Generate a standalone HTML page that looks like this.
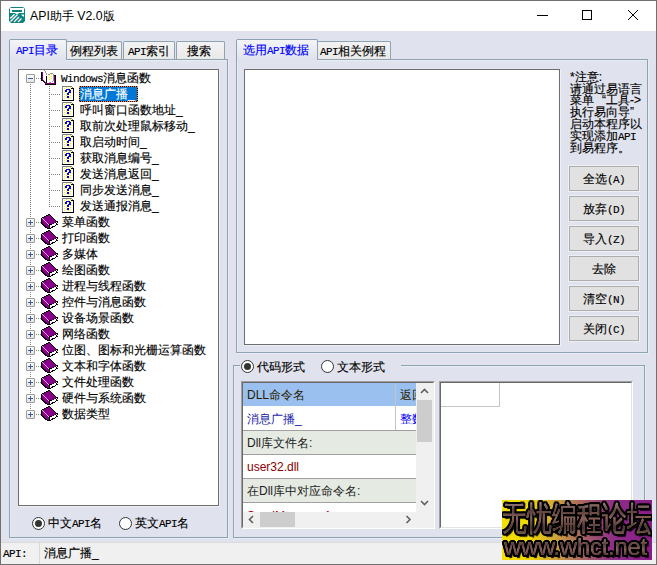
<!DOCTYPE html>
<html><head><meta charset="utf-8">
<style>
*{margin:0;padding:0;box-sizing:border-box}
html,body{width:657px;height:565px;overflow:hidden}
body{position:relative;background:#E0E3ED;font-family:"Liberation Sans",sans-serif;font-size:12px;color:#000;line-height:16px}
.a{position:absolute}
.tr,.tabi,.taba,.btn,.st{-webkit-text-stroke:0.15px currentColor}
.m{font-family:"Liberation Mono",monospace;font-size:11px;letter-spacing:-0.6px}
.tabi{position:absolute;border:1px solid #8DA2B3;border-bottom:none;border-radius:2px 2px 0 0;background:linear-gradient(#F3F3F3,#E9E9E9);height:18px;top:41px;white-space:nowrap;line-height:18px}
.taba{position:absolute;border:1px solid #8DA2B3;border-bottom:none;border-radius:2px 2px 0 0;background:linear-gradient(#F4F5F9,#E0E3ED 95%);height:21px;top:39px;color:#0000FF;white-space:nowrap;z-index:2}
.pane{position:absolute;border:1px solid #8DA2B3;box-shadow:inset 1px 1px 0 #EAECF4,1px 1px 0 #EAECF4}
.sunk{position:absolute;background:#fff;border:1px solid #6E6E6E;box-shadow:1px 1px 0 #EEF0F6}
.btn{position:absolute;left:569px;width:70px;height:25px;border:1px solid #ADADAD;box-shadow:0 0 0 1px #EEF0F6;background:#E1E1E1;text-align:center;line-height:23px;padding-top:1px;white-space:nowrap}
.tr{position:absolute;height:16px;white-space:nowrap;line-height:16px}
.radio{position:absolute;width:13px;height:13px;border:1px solid #333;border-radius:50%;background:#fff}
.radio.on::after{content:"";position:absolute;left:2px;top:2px;width:7px;height:7px;border-radius:50%;background:#333}
.vd{position:absolute;width:1px;background:repeating-linear-gradient(to bottom,#808080 0 1px,transparent 1px 2px)}
.hd{position:absolute;height:1px;background:repeating-linear-gradient(to right,#808080 0 1px,transparent 1px 2px)}
.xb{position:absolute;left:7px;width:9px;height:9px;border:1px solid #9A9A9A;border-radius:1px;background:linear-gradient(#fff,#E4E4E4)}
.xh{position:absolute;left:1px;top:3px;width:5px;height:1px;background:#3D5DA8}
.xv{position:absolute;left:3px;top:1px;width:1px;height:5px;background:#3D5DA8}
.txt{position:absolute;left:60px;top:0;height:16px;padding:0 1px}
.sel{color:#fff;border:1px dotted #FF8728;background:linear-gradient(#0078D7,#0078D7) padding-box,linear-gradient(#000,#000) border-box;padding:0 3px 0 0;line-height:14px;width:59px}
.fw{display:inline-block;width:12px;text-align:center}
.wmf{white-space:nowrap;color:transparent;-webkit-background-clip:text;background-clip:text}
.wmt{white-space:nowrap;color:#A08078;text-shadow:2px 0px 0 #000,-2px 0px 0 #000,0px 2px 0 #000,0px -2px 0 #000,1.5px 1.5px 0 #000,-1.5px -1.5px 0 #000,1.5px -1.5px 0 #000,-1.5px 1.5px 0 #000,1px 2px 0 #000,2px 1px 0 #000,-1px 2px 0 #000,2px -1px 0 #000,1px -2px 0 #000,-2px 1px 0 #000,-1px -2px 0 #000,-2px -1px 0 #000,2px 3px 1px #000}
.gt{white-space:nowrap;font-size:12px}
</style></head><body>
<!-- window frame -->
<div class="a" style="left:0;top:0;width:657px;height:565px;border:1px solid #707070"></div>
<div class="a" style="left:1px;top:1px;width:655px;height:30px;background:#fff"></div>
<svg class="a" style="left:9px;top:7px" width="16" height="16" viewBox="0 0 16 16">
 <path d="M2 0H14L16 2V14L14 16H2L0 14V2Z" fill="#108282"/>
 <path d="M1 1H15V6H10L9 7H7L6 6H1Z" fill="#fff"/>
 <rect x="3" y="3" width="10" height="2" fill="#108282"/>
 <path d="M1.2 11.5L5.5 7.2M1.5 14.5L8.5 7.5M5 15L10 10M9 15L12.5 11.5" stroke="#fff" stroke-width="1.3"/>
 <path d="M12 7.5H15V10L13 8.5Z" fill="#fff"/>
</svg>
<div class="a" style="left:30px;top:7px;font-size:12.3px;line-height:18px;white-space:nowrap">API助手 V2.0版</div>
<div class="a" style="left:537px;top:15px;width:11px;height:1px;background:#000"></div>
<div class="a" style="left:582px;top:10px;width:10px;height:10px;border:1px solid #000"></div>
<svg class="a" style="left:627px;top:9px" width="12" height="12" viewBox="0 0 12 12"><path d="M1 1L11 11M11 1L1 11" stroke="#000" stroke-width="1"/></svg>

<!-- left tabs -->
<div class="pane" style="left:9px;top:59px;width:219px;height:479px"></div>
<div class="tabi" style="left:66px;width:56px;padding-left:3px">例程列表</div>
<div class="tabi" style="left:123px;width:52px;padding-left:4px"><span class="m">API</span>索引</div>
<div class="tabi" style="left:176px;width:49px;padding-left:10px">搜索</div>
<div class="taba" style="left:9px;width:58px;padding-left:6px;line-height:20px"><span class="m">API</span>目录</div>
<div class="a" style="left:10px;top:59px;width:56px;height:2px;background:#E0E3ED;z-index:3"></div>

<!-- tree -->
<div class="sunk" style="left:18px;top:69px;width:201px;height:437px;overflow:hidden" id="tree"><div class="vd" style="left:11px;top:14px;height:330px"></div>
<div class="vd" style="left:30px;top:16px;height:121px"></div>
<div class="xb" style="top:4px"><div class="xh"></div></div>
<div class="hd" style="left:17px;top:8px;width:5px"></div>
<div class="tr" style="top:0px;left:0;width:220px"><svg class="a" style="left:22px;top:0px" width="16" height="16" viewBox="0 0 16 16" shape-rendering="crispEdges"><path d="M2 2H6V13H4Z" fill="#fff"/><path d="M6 5H12V10L8 13H6Z" fill="#fff"/><rect x="0" y="2" width="1" height="9" fill="#000"/><rect x="1" y="2" width="1" height="8" fill="#800080"/><path d="M1 10h1v1h1v1h1v1h1v1H4v-1H3v-1H2v-1H1Z" fill="#000"/><path d="M2 10h1v1h1v1h1v1H4v-1H3v-1H2Z" fill="#800080"/><rect x="4" y="13" width="10" height="1" fill="#800080"/><rect x="4" y="14" width="11" height="1" fill="#000"/><rect x="14" y="5" width="1" height="9" fill="#000"/><rect x="13" y="6" width="1" height="7" fill="#800080"/><rect x="12" y="5" width="2" height="1" fill="#000"/><rect x="5" y="6" width="1" height="7" fill="#000"/><path d="M3 0h1v1h1v2h1v2h-1v-2h-1v-2h-1Z" fill="#999"/><path d="M7 4h2v-1h3v1h-3v1h-2Z" fill="#999"/><rect x="12" y="4" width="1" height="7" fill="#999"/><path d="M11 11h1v1h-2v1h-2v-1h2Z" fill="#999"/><g fill="#F0F000"><rect x="8" y="5" width="1" height="1"/><rect x="8" y="7" width="1" height="1"/><rect x="8" y="9" width="1" height="1"/><rect x="10" y="4" width="1" height="1"/><rect x="10" y="6" width="1" height="1"/><rect x="10" y="8" width="1" height="1"/></g></svg><span class="a" style="left:42px;top:0"><span class="m">Windows</span>消息函数</span></div>
<div class="hd" style="left:32px;top:24px;width:10px"></div>
<div class="tr" style="top:16px;left:0;width:220px"><svg class="a" style="left:43px;top:0px" width="13" height="16" viewBox="0 0 13 16" shape-rendering="crispEdges"><rect x="1" y="1" width="10" height="13" fill="#fff"/><rect x="0" y="0" width="10" height="1" fill="#808080"/><rect x="0" y="0" width="1" height="14" fill="#808080"/><rect x="10" y="1" width="1" height="1" fill="#808080"/><rect x="9" y="2" width="2" height="1" fill="#000"/><rect x="11" y="2" width="1" height="13" fill="#000"/><rect x="0" y="14" width="12" height="1" fill="#000"/><g fill="#F4F400"><rect x="2" y="2" width="1" height="1"/><rect x="4" y="1" width="1" height="1"/><rect x="6" y="2" width="1" height="1"/><rect x="8" y="1" width="1" height="1"/><rect x="2" y="4" width="1" height="1"/><rect x="8" y="3" width="1" height="1"/><rect x="2" y="6" width="1" height="1"/><rect x="2" y="8" width="1" height="1"/><rect x="2" y="10" width="1" height="1"/><rect x="2" y="12" width="1" height="1"/><rect x="4" y="7" width="1" height="1"/><rect x="4" y="9" width="1" height="1"/><rect x="4" y="11" width="1" height="1"/><rect x="6" y="12" width="1" height="1"/><rect x="8" y="7" width="1" height="1"/><rect x="8" y="9" width="1" height="1"/><rect x="8" y="11" width="1" height="1"/><rect x="6" y="4" width="1" height="1"/></g><g fill="#0000F0"><rect x="3" y="4" width="2" height="2"/><rect x="4" y="3" width="4" height="1"/><rect x="7" y="4" width="2" height="3"/><rect x="6" y="6" width="2" height="1"/><rect x="5" y="7" width="2" height="2"/><rect x="5" y="10" width="2" height="2"/></g></svg><span class="txt sel">消息广播_</span></div>
<div class="hd" style="left:32px;top:40px;width:10px"></div>
<div class="tr" style="top:32px;left:0;width:220px"><svg class="a" style="left:43px;top:0px" width="13" height="16" viewBox="0 0 13 16" shape-rendering="crispEdges"><rect x="1" y="1" width="10" height="13" fill="#fff"/><rect x="0" y="0" width="10" height="1" fill="#808080"/><rect x="0" y="0" width="1" height="14" fill="#808080"/><rect x="10" y="1" width="1" height="1" fill="#808080"/><rect x="9" y="2" width="2" height="1" fill="#000"/><rect x="11" y="2" width="1" height="13" fill="#000"/><rect x="0" y="14" width="12" height="1" fill="#000"/><g fill="#F4F400"><rect x="2" y="2" width="1" height="1"/><rect x="4" y="1" width="1" height="1"/><rect x="6" y="2" width="1" height="1"/><rect x="8" y="1" width="1" height="1"/><rect x="2" y="4" width="1" height="1"/><rect x="8" y="3" width="1" height="1"/><rect x="2" y="6" width="1" height="1"/><rect x="2" y="8" width="1" height="1"/><rect x="2" y="10" width="1" height="1"/><rect x="2" y="12" width="1" height="1"/><rect x="4" y="7" width="1" height="1"/><rect x="4" y="9" width="1" height="1"/><rect x="4" y="11" width="1" height="1"/><rect x="6" y="12" width="1" height="1"/><rect x="8" y="7" width="1" height="1"/><rect x="8" y="9" width="1" height="1"/><rect x="8" y="11" width="1" height="1"/><rect x="6" y="4" width="1" height="1"/></g><g fill="#0000F0"><rect x="3" y="4" width="2" height="2"/><rect x="4" y="3" width="4" height="1"/><rect x="7" y="4" width="2" height="3"/><rect x="6" y="6" width="2" height="1"/><rect x="5" y="7" width="2" height="2"/><rect x="5" y="10" width="2" height="2"/></g></svg><span class="txt">呼叫窗口函数地址_</span></div>
<div class="hd" style="left:32px;top:56px;width:10px"></div>
<div class="tr" style="top:48px;left:0;width:220px"><svg class="a" style="left:43px;top:0px" width="13" height="16" viewBox="0 0 13 16" shape-rendering="crispEdges"><rect x="1" y="1" width="10" height="13" fill="#fff"/><rect x="0" y="0" width="10" height="1" fill="#808080"/><rect x="0" y="0" width="1" height="14" fill="#808080"/><rect x="10" y="1" width="1" height="1" fill="#808080"/><rect x="9" y="2" width="2" height="1" fill="#000"/><rect x="11" y="2" width="1" height="13" fill="#000"/><rect x="0" y="14" width="12" height="1" fill="#000"/><g fill="#F4F400"><rect x="2" y="2" width="1" height="1"/><rect x="4" y="1" width="1" height="1"/><rect x="6" y="2" width="1" height="1"/><rect x="8" y="1" width="1" height="1"/><rect x="2" y="4" width="1" height="1"/><rect x="8" y="3" width="1" height="1"/><rect x="2" y="6" width="1" height="1"/><rect x="2" y="8" width="1" height="1"/><rect x="2" y="10" width="1" height="1"/><rect x="2" y="12" width="1" height="1"/><rect x="4" y="7" width="1" height="1"/><rect x="4" y="9" width="1" height="1"/><rect x="4" y="11" width="1" height="1"/><rect x="6" y="12" width="1" height="1"/><rect x="8" y="7" width="1" height="1"/><rect x="8" y="9" width="1" height="1"/><rect x="8" y="11" width="1" height="1"/><rect x="6" y="4" width="1" height="1"/></g><g fill="#0000F0"><rect x="3" y="4" width="2" height="2"/><rect x="4" y="3" width="4" height="1"/><rect x="7" y="4" width="2" height="3"/><rect x="6" y="6" width="2" height="1"/><rect x="5" y="7" width="2" height="2"/><rect x="5" y="10" width="2" height="2"/></g></svg><span class="txt">取前次处理鼠标移动_</span></div>
<div class="hd" style="left:32px;top:72px;width:10px"></div>
<div class="tr" style="top:64px;left:0;width:220px"><svg class="a" style="left:43px;top:0px" width="13" height="16" viewBox="0 0 13 16" shape-rendering="crispEdges"><rect x="1" y="1" width="10" height="13" fill="#fff"/><rect x="0" y="0" width="10" height="1" fill="#808080"/><rect x="0" y="0" width="1" height="14" fill="#808080"/><rect x="10" y="1" width="1" height="1" fill="#808080"/><rect x="9" y="2" width="2" height="1" fill="#000"/><rect x="11" y="2" width="1" height="13" fill="#000"/><rect x="0" y="14" width="12" height="1" fill="#000"/><g fill="#F4F400"><rect x="2" y="2" width="1" height="1"/><rect x="4" y="1" width="1" height="1"/><rect x="6" y="2" width="1" height="1"/><rect x="8" y="1" width="1" height="1"/><rect x="2" y="4" width="1" height="1"/><rect x="8" y="3" width="1" height="1"/><rect x="2" y="6" width="1" height="1"/><rect x="2" y="8" width="1" height="1"/><rect x="2" y="10" width="1" height="1"/><rect x="2" y="12" width="1" height="1"/><rect x="4" y="7" width="1" height="1"/><rect x="4" y="9" width="1" height="1"/><rect x="4" y="11" width="1" height="1"/><rect x="6" y="12" width="1" height="1"/><rect x="8" y="7" width="1" height="1"/><rect x="8" y="9" width="1" height="1"/><rect x="8" y="11" width="1" height="1"/><rect x="6" y="4" width="1" height="1"/></g><g fill="#0000F0"><rect x="3" y="4" width="2" height="2"/><rect x="4" y="3" width="4" height="1"/><rect x="7" y="4" width="2" height="3"/><rect x="6" y="6" width="2" height="1"/><rect x="5" y="7" width="2" height="2"/><rect x="5" y="10" width="2" height="2"/></g></svg><span class="txt">取启动时间_</span></div>
<div class="hd" style="left:32px;top:88px;width:10px"></div>
<div class="tr" style="top:80px;left:0;width:220px"><svg class="a" style="left:43px;top:0px" width="13" height="16" viewBox="0 0 13 16" shape-rendering="crispEdges"><rect x="1" y="1" width="10" height="13" fill="#fff"/><rect x="0" y="0" width="10" height="1" fill="#808080"/><rect x="0" y="0" width="1" height="14" fill="#808080"/><rect x="10" y="1" width="1" height="1" fill="#808080"/><rect x="9" y="2" width="2" height="1" fill="#000"/><rect x="11" y="2" width="1" height="13" fill="#000"/><rect x="0" y="14" width="12" height="1" fill="#000"/><g fill="#F4F400"><rect x="2" y="2" width="1" height="1"/><rect x="4" y="1" width="1" height="1"/><rect x="6" y="2" width="1" height="1"/><rect x="8" y="1" width="1" height="1"/><rect x="2" y="4" width="1" height="1"/><rect x="8" y="3" width="1" height="1"/><rect x="2" y="6" width="1" height="1"/><rect x="2" y="8" width="1" height="1"/><rect x="2" y="10" width="1" height="1"/><rect x="2" y="12" width="1" height="1"/><rect x="4" y="7" width="1" height="1"/><rect x="4" y="9" width="1" height="1"/><rect x="4" y="11" width="1" height="1"/><rect x="6" y="12" width="1" height="1"/><rect x="8" y="7" width="1" height="1"/><rect x="8" y="9" width="1" height="1"/><rect x="8" y="11" width="1" height="1"/><rect x="6" y="4" width="1" height="1"/></g><g fill="#0000F0"><rect x="3" y="4" width="2" height="2"/><rect x="4" y="3" width="4" height="1"/><rect x="7" y="4" width="2" height="3"/><rect x="6" y="6" width="2" height="1"/><rect x="5" y="7" width="2" height="2"/><rect x="5" y="10" width="2" height="2"/></g></svg><span class="txt">获取消息编号_</span></div>
<div class="hd" style="left:32px;top:104px;width:10px"></div>
<div class="tr" style="top:96px;left:0;width:220px"><svg class="a" style="left:43px;top:0px" width="13" height="16" viewBox="0 0 13 16" shape-rendering="crispEdges"><rect x="1" y="1" width="10" height="13" fill="#fff"/><rect x="0" y="0" width="10" height="1" fill="#808080"/><rect x="0" y="0" width="1" height="14" fill="#808080"/><rect x="10" y="1" width="1" height="1" fill="#808080"/><rect x="9" y="2" width="2" height="1" fill="#000"/><rect x="11" y="2" width="1" height="13" fill="#000"/><rect x="0" y="14" width="12" height="1" fill="#000"/><g fill="#F4F400"><rect x="2" y="2" width="1" height="1"/><rect x="4" y="1" width="1" height="1"/><rect x="6" y="2" width="1" height="1"/><rect x="8" y="1" width="1" height="1"/><rect x="2" y="4" width="1" height="1"/><rect x="8" y="3" width="1" height="1"/><rect x="2" y="6" width="1" height="1"/><rect x="2" y="8" width="1" height="1"/><rect x="2" y="10" width="1" height="1"/><rect x="2" y="12" width="1" height="1"/><rect x="4" y="7" width="1" height="1"/><rect x="4" y="9" width="1" height="1"/><rect x="4" y="11" width="1" height="1"/><rect x="6" y="12" width="1" height="1"/><rect x="8" y="7" width="1" height="1"/><rect x="8" y="9" width="1" height="1"/><rect x="8" y="11" width="1" height="1"/><rect x="6" y="4" width="1" height="1"/></g><g fill="#0000F0"><rect x="3" y="4" width="2" height="2"/><rect x="4" y="3" width="4" height="1"/><rect x="7" y="4" width="2" height="3"/><rect x="6" y="6" width="2" height="1"/><rect x="5" y="7" width="2" height="2"/><rect x="5" y="10" width="2" height="2"/></g></svg><span class="txt">发送消息返回_</span></div>
<div class="hd" style="left:32px;top:120px;width:10px"></div>
<div class="tr" style="top:112px;left:0;width:220px"><svg class="a" style="left:43px;top:0px" width="13" height="16" viewBox="0 0 13 16" shape-rendering="crispEdges"><rect x="1" y="1" width="10" height="13" fill="#fff"/><rect x="0" y="0" width="10" height="1" fill="#808080"/><rect x="0" y="0" width="1" height="14" fill="#808080"/><rect x="10" y="1" width="1" height="1" fill="#808080"/><rect x="9" y="2" width="2" height="1" fill="#000"/><rect x="11" y="2" width="1" height="13" fill="#000"/><rect x="0" y="14" width="12" height="1" fill="#000"/><g fill="#F4F400"><rect x="2" y="2" width="1" height="1"/><rect x="4" y="1" width="1" height="1"/><rect x="6" y="2" width="1" height="1"/><rect x="8" y="1" width="1" height="1"/><rect x="2" y="4" width="1" height="1"/><rect x="8" y="3" width="1" height="1"/><rect x="2" y="6" width="1" height="1"/><rect x="2" y="8" width="1" height="1"/><rect x="2" y="10" width="1" height="1"/><rect x="2" y="12" width="1" height="1"/><rect x="4" y="7" width="1" height="1"/><rect x="4" y="9" width="1" height="1"/><rect x="4" y="11" width="1" height="1"/><rect x="6" y="12" width="1" height="1"/><rect x="8" y="7" width="1" height="1"/><rect x="8" y="9" width="1" height="1"/><rect x="8" y="11" width="1" height="1"/><rect x="6" y="4" width="1" height="1"/></g><g fill="#0000F0"><rect x="3" y="4" width="2" height="2"/><rect x="4" y="3" width="4" height="1"/><rect x="7" y="4" width="2" height="3"/><rect x="6" y="6" width="2" height="1"/><rect x="5" y="7" width="2" height="2"/><rect x="5" y="10" width="2" height="2"/></g></svg><span class="txt">同步发送消息_</span></div>
<div class="hd" style="left:32px;top:136px;width:10px"></div>
<div class="tr" style="top:128px;left:0;width:220px"><svg class="a" style="left:43px;top:0px" width="13" height="16" viewBox="0 0 13 16" shape-rendering="crispEdges"><rect x="1" y="1" width="10" height="13" fill="#fff"/><rect x="0" y="0" width="10" height="1" fill="#808080"/><rect x="0" y="0" width="1" height="14" fill="#808080"/><rect x="10" y="1" width="1" height="1" fill="#808080"/><rect x="9" y="2" width="2" height="1" fill="#000"/><rect x="11" y="2" width="1" height="13" fill="#000"/><rect x="0" y="14" width="12" height="1" fill="#000"/><g fill="#F4F400"><rect x="2" y="2" width="1" height="1"/><rect x="4" y="1" width="1" height="1"/><rect x="6" y="2" width="1" height="1"/><rect x="8" y="1" width="1" height="1"/><rect x="2" y="4" width="1" height="1"/><rect x="8" y="3" width="1" height="1"/><rect x="2" y="6" width="1" height="1"/><rect x="2" y="8" width="1" height="1"/><rect x="2" y="10" width="1" height="1"/><rect x="2" y="12" width="1" height="1"/><rect x="4" y="7" width="1" height="1"/><rect x="4" y="9" width="1" height="1"/><rect x="4" y="11" width="1" height="1"/><rect x="6" y="12" width="1" height="1"/><rect x="8" y="7" width="1" height="1"/><rect x="8" y="9" width="1" height="1"/><rect x="8" y="11" width="1" height="1"/><rect x="6" y="4" width="1" height="1"/></g><g fill="#0000F0"><rect x="3" y="4" width="2" height="2"/><rect x="4" y="3" width="4" height="1"/><rect x="7" y="4" width="2" height="3"/><rect x="6" y="6" width="2" height="1"/><rect x="5" y="7" width="2" height="2"/><rect x="5" y="10" width="2" height="2"/></g></svg><span class="txt">发送通报消息_</span></div>
<div class="xb" style="top:148px"><div class="xh"></div><div class="xv"></div></div>
<div class="hd" style="left:17px;top:152px;width:5px"></div>
<div class="tr" style="top:144px;left:0;width:220px"><svg class="a" style="left:22px;top:0px" width="17" height="16" viewBox="0 0 17 16" shape-rendering="crispEdges"><rect x="7" y="0" width="2" height="1" fill="#000"/><rect x="5" y="1" width="2" height="1" fill="#000"/><rect x="7" y="1" width="2" height="1" fill="#880088"/><rect x="9" y="1" width="1" height="1" fill="#000"/><rect x="3" y="2" width="2" height="1" fill="#000"/><rect x="5" y="2" width="5" height="1" fill="#880088"/><rect x="10" y="2" width="1" height="1" fill="#000"/><rect x="1" y="3" width="2" height="1" fill="#000"/><rect x="3" y="3" width="8" height="1" fill="#880088"/><rect x="11" y="3" width="1" height="1" fill="#000"/><rect x="0" y="4" width="1" height="1" fill="#000"/><rect x="1" y="4" width="1" height="1" fill="#E8B8E8"/><rect x="2" y="4" width="10" height="1" fill="#880088"/><rect x="12" y="4" width="1" height="1" fill="#000"/><rect x="0" y="5" width="1" height="1" fill="#000"/><rect x="1" y="5" width="1" height="1" fill="#880088"/><rect x="2" y="5" width="1" height="1" fill="#E8B8E8"/><rect x="3" y="5" width="10" height="1" fill="#880088"/><rect x="13" y="5" width="1" height="1" fill="#000"/><rect x="0" y="6" width="1" height="1" fill="#000"/><rect x="1" y="6" width="2" height="1" fill="#880088"/><rect x="3" y="6" width="1" height="1" fill="#E8B8E8"/><rect x="4" y="6" width="10" height="1" fill="#880088"/><rect x="14" y="6" width="1" height="1" fill="#000"/><rect x="0" y="7" width="1" height="1" fill="#000"/><rect x="1" y="7" width="3" height="1" fill="#880088"/><rect x="4" y="7" width="1" height="1" fill="#E8B8E8"/><rect x="5" y="7" width="10" height="1" fill="#880088"/><rect x="15" y="7" width="2" height="1" fill="#000"/><rect x="-1" y="8" width="2" height="1" fill="#000"/><rect x="1" y="8" width="4" height="1" fill="#880088"/><rect x="5" y="8" width="1" height="1" fill="#E8B8E8"/><rect x="6" y="8" width="8" height="1" fill="#880088"/><rect x="14" y="8" width="1" height="1" fill="#000"/><rect x="15" y="8" width="1" height="1" fill="#fff"/><rect x="16" y="8" width="1" height="1" fill="#000"/><rect x="0" y="9" width="2" height="1" fill="#000"/><rect x="2" y="9" width="4" height="1" fill="#880088"/><rect x="6" y="9" width="1" height="1" fill="#E8B8E8"/><rect x="7" y="9" width="5" height="1" fill="#880088"/><rect x="12" y="9" width="1" height="1" fill="#000"/><rect x="13" y="9" width="2" height="1" fill="#fff"/><rect x="15" y="9" width="1" height="1" fill="#000"/><rect x="1" y="10" width="2" height="1" fill="#000"/><rect x="3" y="10" width="4" height="1" fill="#880088"/><rect x="7" y="10" width="1" height="1" fill="#E8B8E8"/><rect x="8" y="10" width="3" height="1" fill="#000"/><rect x="11" y="10" width="4" height="1" fill="#fff"/><rect x="15" y="10" width="2" height="1" fill="#000"/><rect x="2" y="11" width="2" height="1" fill="#000"/><rect x="4" y="11" width="4" height="1" fill="#880088"/><rect x="8" y="11" width="1" height="1" fill="#000"/><rect x="9" y="11" width="5" height="1" fill="#fff"/><rect x="14" y="11" width="1" height="1" fill="#000"/><rect x="3" y="12" width="2" height="1" fill="#000"/><rect x="5" y="12" width="3" height="1" fill="#880088"/><rect x="8" y="12" width="1" height="1" fill="#000"/><rect x="9" y="12" width="2" height="1" fill="#fff"/><rect x="11" y="12" width="3" height="1" fill="#000"/><rect x="4" y="13" width="2" height="1" fill="#000"/><rect x="6" y="13" width="2" height="1" fill="#880088"/><rect x="8" y="13" width="1" height="1" fill="#000"/><rect x="9" y="13" width="1" height="1" fill="#fff"/><rect x="10" y="13" width="2" height="1" fill="#000"/><rect x="6" y="14" width="4" height="1" fill="#000"/></svg><span class="a" style="left:43px;top:0">菜单函数</span></div>
<div class="xb" style="top:164px"><div class="xh"></div><div class="xv"></div></div>
<div class="hd" style="left:17px;top:168px;width:5px"></div>
<div class="tr" style="top:160px;left:0;width:220px"><svg class="a" style="left:22px;top:0px" width="17" height="16" viewBox="0 0 17 16" shape-rendering="crispEdges"><rect x="7" y="0" width="2" height="1" fill="#000"/><rect x="5" y="1" width="2" height="1" fill="#000"/><rect x="7" y="1" width="2" height="1" fill="#880088"/><rect x="9" y="1" width="1" height="1" fill="#000"/><rect x="3" y="2" width="2" height="1" fill="#000"/><rect x="5" y="2" width="5" height="1" fill="#880088"/><rect x="10" y="2" width="1" height="1" fill="#000"/><rect x="1" y="3" width="2" height="1" fill="#000"/><rect x="3" y="3" width="8" height="1" fill="#880088"/><rect x="11" y="3" width="1" height="1" fill="#000"/><rect x="0" y="4" width="1" height="1" fill="#000"/><rect x="1" y="4" width="1" height="1" fill="#E8B8E8"/><rect x="2" y="4" width="10" height="1" fill="#880088"/><rect x="12" y="4" width="1" height="1" fill="#000"/><rect x="0" y="5" width="1" height="1" fill="#000"/><rect x="1" y="5" width="1" height="1" fill="#880088"/><rect x="2" y="5" width="1" height="1" fill="#E8B8E8"/><rect x="3" y="5" width="10" height="1" fill="#880088"/><rect x="13" y="5" width="1" height="1" fill="#000"/><rect x="0" y="6" width="1" height="1" fill="#000"/><rect x="1" y="6" width="2" height="1" fill="#880088"/><rect x="3" y="6" width="1" height="1" fill="#E8B8E8"/><rect x="4" y="6" width="10" height="1" fill="#880088"/><rect x="14" y="6" width="1" height="1" fill="#000"/><rect x="0" y="7" width="1" height="1" fill="#000"/><rect x="1" y="7" width="3" height="1" fill="#880088"/><rect x="4" y="7" width="1" height="1" fill="#E8B8E8"/><rect x="5" y="7" width="10" height="1" fill="#880088"/><rect x="15" y="7" width="2" height="1" fill="#000"/><rect x="-1" y="8" width="2" height="1" fill="#000"/><rect x="1" y="8" width="4" height="1" fill="#880088"/><rect x="5" y="8" width="1" height="1" fill="#E8B8E8"/><rect x="6" y="8" width="8" height="1" fill="#880088"/><rect x="14" y="8" width="1" height="1" fill="#000"/><rect x="15" y="8" width="1" height="1" fill="#fff"/><rect x="16" y="8" width="1" height="1" fill="#000"/><rect x="0" y="9" width="2" height="1" fill="#000"/><rect x="2" y="9" width="4" height="1" fill="#880088"/><rect x="6" y="9" width="1" height="1" fill="#E8B8E8"/><rect x="7" y="9" width="5" height="1" fill="#880088"/><rect x="12" y="9" width="1" height="1" fill="#000"/><rect x="13" y="9" width="2" height="1" fill="#fff"/><rect x="15" y="9" width="1" height="1" fill="#000"/><rect x="1" y="10" width="2" height="1" fill="#000"/><rect x="3" y="10" width="4" height="1" fill="#880088"/><rect x="7" y="10" width="1" height="1" fill="#E8B8E8"/><rect x="8" y="10" width="3" height="1" fill="#000"/><rect x="11" y="10" width="4" height="1" fill="#fff"/><rect x="15" y="10" width="2" height="1" fill="#000"/><rect x="2" y="11" width="2" height="1" fill="#000"/><rect x="4" y="11" width="4" height="1" fill="#880088"/><rect x="8" y="11" width="1" height="1" fill="#000"/><rect x="9" y="11" width="5" height="1" fill="#fff"/><rect x="14" y="11" width="1" height="1" fill="#000"/><rect x="3" y="12" width="2" height="1" fill="#000"/><rect x="5" y="12" width="3" height="1" fill="#880088"/><rect x="8" y="12" width="1" height="1" fill="#000"/><rect x="9" y="12" width="2" height="1" fill="#fff"/><rect x="11" y="12" width="3" height="1" fill="#000"/><rect x="4" y="13" width="2" height="1" fill="#000"/><rect x="6" y="13" width="2" height="1" fill="#880088"/><rect x="8" y="13" width="1" height="1" fill="#000"/><rect x="9" y="13" width="1" height="1" fill="#fff"/><rect x="10" y="13" width="2" height="1" fill="#000"/><rect x="6" y="14" width="4" height="1" fill="#000"/></svg><span class="a" style="left:43px;top:0">打印函数</span></div>
<div class="xb" style="top:180px"><div class="xh"></div><div class="xv"></div></div>
<div class="hd" style="left:17px;top:184px;width:5px"></div>
<div class="tr" style="top:176px;left:0;width:220px"><svg class="a" style="left:22px;top:0px" width="17" height="16" viewBox="0 0 17 16" shape-rendering="crispEdges"><rect x="7" y="0" width="2" height="1" fill="#000"/><rect x="5" y="1" width="2" height="1" fill="#000"/><rect x="7" y="1" width="2" height="1" fill="#880088"/><rect x="9" y="1" width="1" height="1" fill="#000"/><rect x="3" y="2" width="2" height="1" fill="#000"/><rect x="5" y="2" width="5" height="1" fill="#880088"/><rect x="10" y="2" width="1" height="1" fill="#000"/><rect x="1" y="3" width="2" height="1" fill="#000"/><rect x="3" y="3" width="8" height="1" fill="#880088"/><rect x="11" y="3" width="1" height="1" fill="#000"/><rect x="0" y="4" width="1" height="1" fill="#000"/><rect x="1" y="4" width="1" height="1" fill="#E8B8E8"/><rect x="2" y="4" width="10" height="1" fill="#880088"/><rect x="12" y="4" width="1" height="1" fill="#000"/><rect x="0" y="5" width="1" height="1" fill="#000"/><rect x="1" y="5" width="1" height="1" fill="#880088"/><rect x="2" y="5" width="1" height="1" fill="#E8B8E8"/><rect x="3" y="5" width="10" height="1" fill="#880088"/><rect x="13" y="5" width="1" height="1" fill="#000"/><rect x="0" y="6" width="1" height="1" fill="#000"/><rect x="1" y="6" width="2" height="1" fill="#880088"/><rect x="3" y="6" width="1" height="1" fill="#E8B8E8"/><rect x="4" y="6" width="10" height="1" fill="#880088"/><rect x="14" y="6" width="1" height="1" fill="#000"/><rect x="0" y="7" width="1" height="1" fill="#000"/><rect x="1" y="7" width="3" height="1" fill="#880088"/><rect x="4" y="7" width="1" height="1" fill="#E8B8E8"/><rect x="5" y="7" width="10" height="1" fill="#880088"/><rect x="15" y="7" width="2" height="1" fill="#000"/><rect x="-1" y="8" width="2" height="1" fill="#000"/><rect x="1" y="8" width="4" height="1" fill="#880088"/><rect x="5" y="8" width="1" height="1" fill="#E8B8E8"/><rect x="6" y="8" width="8" height="1" fill="#880088"/><rect x="14" y="8" width="1" height="1" fill="#000"/><rect x="15" y="8" width="1" height="1" fill="#fff"/><rect x="16" y="8" width="1" height="1" fill="#000"/><rect x="0" y="9" width="2" height="1" fill="#000"/><rect x="2" y="9" width="4" height="1" fill="#880088"/><rect x="6" y="9" width="1" height="1" fill="#E8B8E8"/><rect x="7" y="9" width="5" height="1" fill="#880088"/><rect x="12" y="9" width="1" height="1" fill="#000"/><rect x="13" y="9" width="2" height="1" fill="#fff"/><rect x="15" y="9" width="1" height="1" fill="#000"/><rect x="1" y="10" width="2" height="1" fill="#000"/><rect x="3" y="10" width="4" height="1" fill="#880088"/><rect x="7" y="10" width="1" height="1" fill="#E8B8E8"/><rect x="8" y="10" width="3" height="1" fill="#000"/><rect x="11" y="10" width="4" height="1" fill="#fff"/><rect x="15" y="10" width="2" height="1" fill="#000"/><rect x="2" y="11" width="2" height="1" fill="#000"/><rect x="4" y="11" width="4" height="1" fill="#880088"/><rect x="8" y="11" width="1" height="1" fill="#000"/><rect x="9" y="11" width="5" height="1" fill="#fff"/><rect x="14" y="11" width="1" height="1" fill="#000"/><rect x="3" y="12" width="2" height="1" fill="#000"/><rect x="5" y="12" width="3" height="1" fill="#880088"/><rect x="8" y="12" width="1" height="1" fill="#000"/><rect x="9" y="12" width="2" height="1" fill="#fff"/><rect x="11" y="12" width="3" height="1" fill="#000"/><rect x="4" y="13" width="2" height="1" fill="#000"/><rect x="6" y="13" width="2" height="1" fill="#880088"/><rect x="8" y="13" width="1" height="1" fill="#000"/><rect x="9" y="13" width="1" height="1" fill="#fff"/><rect x="10" y="13" width="2" height="1" fill="#000"/><rect x="6" y="14" width="4" height="1" fill="#000"/></svg><span class="a" style="left:43px;top:0">多媒体</span></div>
<div class="xb" style="top:196px"><div class="xh"></div><div class="xv"></div></div>
<div class="hd" style="left:17px;top:200px;width:5px"></div>
<div class="tr" style="top:192px;left:0;width:220px"><svg class="a" style="left:22px;top:0px" width="17" height="16" viewBox="0 0 17 16" shape-rendering="crispEdges"><rect x="7" y="0" width="2" height="1" fill="#000"/><rect x="5" y="1" width="2" height="1" fill="#000"/><rect x="7" y="1" width="2" height="1" fill="#880088"/><rect x="9" y="1" width="1" height="1" fill="#000"/><rect x="3" y="2" width="2" height="1" fill="#000"/><rect x="5" y="2" width="5" height="1" fill="#880088"/><rect x="10" y="2" width="1" height="1" fill="#000"/><rect x="1" y="3" width="2" height="1" fill="#000"/><rect x="3" y="3" width="8" height="1" fill="#880088"/><rect x="11" y="3" width="1" height="1" fill="#000"/><rect x="0" y="4" width="1" height="1" fill="#000"/><rect x="1" y="4" width="1" height="1" fill="#E8B8E8"/><rect x="2" y="4" width="10" height="1" fill="#880088"/><rect x="12" y="4" width="1" height="1" fill="#000"/><rect x="0" y="5" width="1" height="1" fill="#000"/><rect x="1" y="5" width="1" height="1" fill="#880088"/><rect x="2" y="5" width="1" height="1" fill="#E8B8E8"/><rect x="3" y="5" width="10" height="1" fill="#880088"/><rect x="13" y="5" width="1" height="1" fill="#000"/><rect x="0" y="6" width="1" height="1" fill="#000"/><rect x="1" y="6" width="2" height="1" fill="#880088"/><rect x="3" y="6" width="1" height="1" fill="#E8B8E8"/><rect x="4" y="6" width="10" height="1" fill="#880088"/><rect x="14" y="6" width="1" height="1" fill="#000"/><rect x="0" y="7" width="1" height="1" fill="#000"/><rect x="1" y="7" width="3" height="1" fill="#880088"/><rect x="4" y="7" width="1" height="1" fill="#E8B8E8"/><rect x="5" y="7" width="10" height="1" fill="#880088"/><rect x="15" y="7" width="2" height="1" fill="#000"/><rect x="-1" y="8" width="2" height="1" fill="#000"/><rect x="1" y="8" width="4" height="1" fill="#880088"/><rect x="5" y="8" width="1" height="1" fill="#E8B8E8"/><rect x="6" y="8" width="8" height="1" fill="#880088"/><rect x="14" y="8" width="1" height="1" fill="#000"/><rect x="15" y="8" width="1" height="1" fill="#fff"/><rect x="16" y="8" width="1" height="1" fill="#000"/><rect x="0" y="9" width="2" height="1" fill="#000"/><rect x="2" y="9" width="4" height="1" fill="#880088"/><rect x="6" y="9" width="1" height="1" fill="#E8B8E8"/><rect x="7" y="9" width="5" height="1" fill="#880088"/><rect x="12" y="9" width="1" height="1" fill="#000"/><rect x="13" y="9" width="2" height="1" fill="#fff"/><rect x="15" y="9" width="1" height="1" fill="#000"/><rect x="1" y="10" width="2" height="1" fill="#000"/><rect x="3" y="10" width="4" height="1" fill="#880088"/><rect x="7" y="10" width="1" height="1" fill="#E8B8E8"/><rect x="8" y="10" width="3" height="1" fill="#000"/><rect x="11" y="10" width="4" height="1" fill="#fff"/><rect x="15" y="10" width="2" height="1" fill="#000"/><rect x="2" y="11" width="2" height="1" fill="#000"/><rect x="4" y="11" width="4" height="1" fill="#880088"/><rect x="8" y="11" width="1" height="1" fill="#000"/><rect x="9" y="11" width="5" height="1" fill="#fff"/><rect x="14" y="11" width="1" height="1" fill="#000"/><rect x="3" y="12" width="2" height="1" fill="#000"/><rect x="5" y="12" width="3" height="1" fill="#880088"/><rect x="8" y="12" width="1" height="1" fill="#000"/><rect x="9" y="12" width="2" height="1" fill="#fff"/><rect x="11" y="12" width="3" height="1" fill="#000"/><rect x="4" y="13" width="2" height="1" fill="#000"/><rect x="6" y="13" width="2" height="1" fill="#880088"/><rect x="8" y="13" width="1" height="1" fill="#000"/><rect x="9" y="13" width="1" height="1" fill="#fff"/><rect x="10" y="13" width="2" height="1" fill="#000"/><rect x="6" y="14" width="4" height="1" fill="#000"/></svg><span class="a" style="left:43px;top:0">绘图函数</span></div>
<div class="xb" style="top:212px"><div class="xh"></div><div class="xv"></div></div>
<div class="hd" style="left:17px;top:216px;width:5px"></div>
<div class="tr" style="top:208px;left:0;width:220px"><svg class="a" style="left:22px;top:0px" width="17" height="16" viewBox="0 0 17 16" shape-rendering="crispEdges"><rect x="7" y="0" width="2" height="1" fill="#000"/><rect x="5" y="1" width="2" height="1" fill="#000"/><rect x="7" y="1" width="2" height="1" fill="#880088"/><rect x="9" y="1" width="1" height="1" fill="#000"/><rect x="3" y="2" width="2" height="1" fill="#000"/><rect x="5" y="2" width="5" height="1" fill="#880088"/><rect x="10" y="2" width="1" height="1" fill="#000"/><rect x="1" y="3" width="2" height="1" fill="#000"/><rect x="3" y="3" width="8" height="1" fill="#880088"/><rect x="11" y="3" width="1" height="1" fill="#000"/><rect x="0" y="4" width="1" height="1" fill="#000"/><rect x="1" y="4" width="1" height="1" fill="#E8B8E8"/><rect x="2" y="4" width="10" height="1" fill="#880088"/><rect x="12" y="4" width="1" height="1" fill="#000"/><rect x="0" y="5" width="1" height="1" fill="#000"/><rect x="1" y="5" width="1" height="1" fill="#880088"/><rect x="2" y="5" width="1" height="1" fill="#E8B8E8"/><rect x="3" y="5" width="10" height="1" fill="#880088"/><rect x="13" y="5" width="1" height="1" fill="#000"/><rect x="0" y="6" width="1" height="1" fill="#000"/><rect x="1" y="6" width="2" height="1" fill="#880088"/><rect x="3" y="6" width="1" height="1" fill="#E8B8E8"/><rect x="4" y="6" width="10" height="1" fill="#880088"/><rect x="14" y="6" width="1" height="1" fill="#000"/><rect x="0" y="7" width="1" height="1" fill="#000"/><rect x="1" y="7" width="3" height="1" fill="#880088"/><rect x="4" y="7" width="1" height="1" fill="#E8B8E8"/><rect x="5" y="7" width="10" height="1" fill="#880088"/><rect x="15" y="7" width="2" height="1" fill="#000"/><rect x="-1" y="8" width="2" height="1" fill="#000"/><rect x="1" y="8" width="4" height="1" fill="#880088"/><rect x="5" y="8" width="1" height="1" fill="#E8B8E8"/><rect x="6" y="8" width="8" height="1" fill="#880088"/><rect x="14" y="8" width="1" height="1" fill="#000"/><rect x="15" y="8" width="1" height="1" fill="#fff"/><rect x="16" y="8" width="1" height="1" fill="#000"/><rect x="0" y="9" width="2" height="1" fill="#000"/><rect x="2" y="9" width="4" height="1" fill="#880088"/><rect x="6" y="9" width="1" height="1" fill="#E8B8E8"/><rect x="7" y="9" width="5" height="1" fill="#880088"/><rect x="12" y="9" width="1" height="1" fill="#000"/><rect x="13" y="9" width="2" height="1" fill="#fff"/><rect x="15" y="9" width="1" height="1" fill="#000"/><rect x="1" y="10" width="2" height="1" fill="#000"/><rect x="3" y="10" width="4" height="1" fill="#880088"/><rect x="7" y="10" width="1" height="1" fill="#E8B8E8"/><rect x="8" y="10" width="3" height="1" fill="#000"/><rect x="11" y="10" width="4" height="1" fill="#fff"/><rect x="15" y="10" width="2" height="1" fill="#000"/><rect x="2" y="11" width="2" height="1" fill="#000"/><rect x="4" y="11" width="4" height="1" fill="#880088"/><rect x="8" y="11" width="1" height="1" fill="#000"/><rect x="9" y="11" width="5" height="1" fill="#fff"/><rect x="14" y="11" width="1" height="1" fill="#000"/><rect x="3" y="12" width="2" height="1" fill="#000"/><rect x="5" y="12" width="3" height="1" fill="#880088"/><rect x="8" y="12" width="1" height="1" fill="#000"/><rect x="9" y="12" width="2" height="1" fill="#fff"/><rect x="11" y="12" width="3" height="1" fill="#000"/><rect x="4" y="13" width="2" height="1" fill="#000"/><rect x="6" y="13" width="2" height="1" fill="#880088"/><rect x="8" y="13" width="1" height="1" fill="#000"/><rect x="9" y="13" width="1" height="1" fill="#fff"/><rect x="10" y="13" width="2" height="1" fill="#000"/><rect x="6" y="14" width="4" height="1" fill="#000"/></svg><span class="a" style="left:43px;top:0">进程与线程函数</span></div>
<div class="xb" style="top:228px"><div class="xh"></div><div class="xv"></div></div>
<div class="hd" style="left:17px;top:232px;width:5px"></div>
<div class="tr" style="top:224px;left:0;width:220px"><svg class="a" style="left:22px;top:0px" width="17" height="16" viewBox="0 0 17 16" shape-rendering="crispEdges"><rect x="7" y="0" width="2" height="1" fill="#000"/><rect x="5" y="1" width="2" height="1" fill="#000"/><rect x="7" y="1" width="2" height="1" fill="#880088"/><rect x="9" y="1" width="1" height="1" fill="#000"/><rect x="3" y="2" width="2" height="1" fill="#000"/><rect x="5" y="2" width="5" height="1" fill="#880088"/><rect x="10" y="2" width="1" height="1" fill="#000"/><rect x="1" y="3" width="2" height="1" fill="#000"/><rect x="3" y="3" width="8" height="1" fill="#880088"/><rect x="11" y="3" width="1" height="1" fill="#000"/><rect x="0" y="4" width="1" height="1" fill="#000"/><rect x="1" y="4" width="1" height="1" fill="#E8B8E8"/><rect x="2" y="4" width="10" height="1" fill="#880088"/><rect x="12" y="4" width="1" height="1" fill="#000"/><rect x="0" y="5" width="1" height="1" fill="#000"/><rect x="1" y="5" width="1" height="1" fill="#880088"/><rect x="2" y="5" width="1" height="1" fill="#E8B8E8"/><rect x="3" y="5" width="10" height="1" fill="#880088"/><rect x="13" y="5" width="1" height="1" fill="#000"/><rect x="0" y="6" width="1" height="1" fill="#000"/><rect x="1" y="6" width="2" height="1" fill="#880088"/><rect x="3" y="6" width="1" height="1" fill="#E8B8E8"/><rect x="4" y="6" width="10" height="1" fill="#880088"/><rect x="14" y="6" width="1" height="1" fill="#000"/><rect x="0" y="7" width="1" height="1" fill="#000"/><rect x="1" y="7" width="3" height="1" fill="#880088"/><rect x="4" y="7" width="1" height="1" fill="#E8B8E8"/><rect x="5" y="7" width="10" height="1" fill="#880088"/><rect x="15" y="7" width="2" height="1" fill="#000"/><rect x="-1" y="8" width="2" height="1" fill="#000"/><rect x="1" y="8" width="4" height="1" fill="#880088"/><rect x="5" y="8" width="1" height="1" fill="#E8B8E8"/><rect x="6" y="8" width="8" height="1" fill="#880088"/><rect x="14" y="8" width="1" height="1" fill="#000"/><rect x="15" y="8" width="1" height="1" fill="#fff"/><rect x="16" y="8" width="1" height="1" fill="#000"/><rect x="0" y="9" width="2" height="1" fill="#000"/><rect x="2" y="9" width="4" height="1" fill="#880088"/><rect x="6" y="9" width="1" height="1" fill="#E8B8E8"/><rect x="7" y="9" width="5" height="1" fill="#880088"/><rect x="12" y="9" width="1" height="1" fill="#000"/><rect x="13" y="9" width="2" height="1" fill="#fff"/><rect x="15" y="9" width="1" height="1" fill="#000"/><rect x="1" y="10" width="2" height="1" fill="#000"/><rect x="3" y="10" width="4" height="1" fill="#880088"/><rect x="7" y="10" width="1" height="1" fill="#E8B8E8"/><rect x="8" y="10" width="3" height="1" fill="#000"/><rect x="11" y="10" width="4" height="1" fill="#fff"/><rect x="15" y="10" width="2" height="1" fill="#000"/><rect x="2" y="11" width="2" height="1" fill="#000"/><rect x="4" y="11" width="4" height="1" fill="#880088"/><rect x="8" y="11" width="1" height="1" fill="#000"/><rect x="9" y="11" width="5" height="1" fill="#fff"/><rect x="14" y="11" width="1" height="1" fill="#000"/><rect x="3" y="12" width="2" height="1" fill="#000"/><rect x="5" y="12" width="3" height="1" fill="#880088"/><rect x="8" y="12" width="1" height="1" fill="#000"/><rect x="9" y="12" width="2" height="1" fill="#fff"/><rect x="11" y="12" width="3" height="1" fill="#000"/><rect x="4" y="13" width="2" height="1" fill="#000"/><rect x="6" y="13" width="2" height="1" fill="#880088"/><rect x="8" y="13" width="1" height="1" fill="#000"/><rect x="9" y="13" width="1" height="1" fill="#fff"/><rect x="10" y="13" width="2" height="1" fill="#000"/><rect x="6" y="14" width="4" height="1" fill="#000"/></svg><span class="a" style="left:43px;top:0">控件与消息函数</span></div>
<div class="xb" style="top:244px"><div class="xh"></div><div class="xv"></div></div>
<div class="hd" style="left:17px;top:248px;width:5px"></div>
<div class="tr" style="top:240px;left:0;width:220px"><svg class="a" style="left:22px;top:0px" width="17" height="16" viewBox="0 0 17 16" shape-rendering="crispEdges"><rect x="7" y="0" width="2" height="1" fill="#000"/><rect x="5" y="1" width="2" height="1" fill="#000"/><rect x="7" y="1" width="2" height="1" fill="#880088"/><rect x="9" y="1" width="1" height="1" fill="#000"/><rect x="3" y="2" width="2" height="1" fill="#000"/><rect x="5" y="2" width="5" height="1" fill="#880088"/><rect x="10" y="2" width="1" height="1" fill="#000"/><rect x="1" y="3" width="2" height="1" fill="#000"/><rect x="3" y="3" width="8" height="1" fill="#880088"/><rect x="11" y="3" width="1" height="1" fill="#000"/><rect x="0" y="4" width="1" height="1" fill="#000"/><rect x="1" y="4" width="1" height="1" fill="#E8B8E8"/><rect x="2" y="4" width="10" height="1" fill="#880088"/><rect x="12" y="4" width="1" height="1" fill="#000"/><rect x="0" y="5" width="1" height="1" fill="#000"/><rect x="1" y="5" width="1" height="1" fill="#880088"/><rect x="2" y="5" width="1" height="1" fill="#E8B8E8"/><rect x="3" y="5" width="10" height="1" fill="#880088"/><rect x="13" y="5" width="1" height="1" fill="#000"/><rect x="0" y="6" width="1" height="1" fill="#000"/><rect x="1" y="6" width="2" height="1" fill="#880088"/><rect x="3" y="6" width="1" height="1" fill="#E8B8E8"/><rect x="4" y="6" width="10" height="1" fill="#880088"/><rect x="14" y="6" width="1" height="1" fill="#000"/><rect x="0" y="7" width="1" height="1" fill="#000"/><rect x="1" y="7" width="3" height="1" fill="#880088"/><rect x="4" y="7" width="1" height="1" fill="#E8B8E8"/><rect x="5" y="7" width="10" height="1" fill="#880088"/><rect x="15" y="7" width="2" height="1" fill="#000"/><rect x="-1" y="8" width="2" height="1" fill="#000"/><rect x="1" y="8" width="4" height="1" fill="#880088"/><rect x="5" y="8" width="1" height="1" fill="#E8B8E8"/><rect x="6" y="8" width="8" height="1" fill="#880088"/><rect x="14" y="8" width="1" height="1" fill="#000"/><rect x="15" y="8" width="1" height="1" fill="#fff"/><rect x="16" y="8" width="1" height="1" fill="#000"/><rect x="0" y="9" width="2" height="1" fill="#000"/><rect x="2" y="9" width="4" height="1" fill="#880088"/><rect x="6" y="9" width="1" height="1" fill="#E8B8E8"/><rect x="7" y="9" width="5" height="1" fill="#880088"/><rect x="12" y="9" width="1" height="1" fill="#000"/><rect x="13" y="9" width="2" height="1" fill="#fff"/><rect x="15" y="9" width="1" height="1" fill="#000"/><rect x="1" y="10" width="2" height="1" fill="#000"/><rect x="3" y="10" width="4" height="1" fill="#880088"/><rect x="7" y="10" width="1" height="1" fill="#E8B8E8"/><rect x="8" y="10" width="3" height="1" fill="#000"/><rect x="11" y="10" width="4" height="1" fill="#fff"/><rect x="15" y="10" width="2" height="1" fill="#000"/><rect x="2" y="11" width="2" height="1" fill="#000"/><rect x="4" y="11" width="4" height="1" fill="#880088"/><rect x="8" y="11" width="1" height="1" fill="#000"/><rect x="9" y="11" width="5" height="1" fill="#fff"/><rect x="14" y="11" width="1" height="1" fill="#000"/><rect x="3" y="12" width="2" height="1" fill="#000"/><rect x="5" y="12" width="3" height="1" fill="#880088"/><rect x="8" y="12" width="1" height="1" fill="#000"/><rect x="9" y="12" width="2" height="1" fill="#fff"/><rect x="11" y="12" width="3" height="1" fill="#000"/><rect x="4" y="13" width="2" height="1" fill="#000"/><rect x="6" y="13" width="2" height="1" fill="#880088"/><rect x="8" y="13" width="1" height="1" fill="#000"/><rect x="9" y="13" width="1" height="1" fill="#fff"/><rect x="10" y="13" width="2" height="1" fill="#000"/><rect x="6" y="14" width="4" height="1" fill="#000"/></svg><span class="a" style="left:43px;top:0">设备场景函数</span></div>
<div class="xb" style="top:260px"><div class="xh"></div><div class="xv"></div></div>
<div class="hd" style="left:17px;top:264px;width:5px"></div>
<div class="tr" style="top:256px;left:0;width:220px"><svg class="a" style="left:22px;top:0px" width="17" height="16" viewBox="0 0 17 16" shape-rendering="crispEdges"><rect x="7" y="0" width="2" height="1" fill="#000"/><rect x="5" y="1" width="2" height="1" fill="#000"/><rect x="7" y="1" width="2" height="1" fill="#880088"/><rect x="9" y="1" width="1" height="1" fill="#000"/><rect x="3" y="2" width="2" height="1" fill="#000"/><rect x="5" y="2" width="5" height="1" fill="#880088"/><rect x="10" y="2" width="1" height="1" fill="#000"/><rect x="1" y="3" width="2" height="1" fill="#000"/><rect x="3" y="3" width="8" height="1" fill="#880088"/><rect x="11" y="3" width="1" height="1" fill="#000"/><rect x="0" y="4" width="1" height="1" fill="#000"/><rect x="1" y="4" width="1" height="1" fill="#E8B8E8"/><rect x="2" y="4" width="10" height="1" fill="#880088"/><rect x="12" y="4" width="1" height="1" fill="#000"/><rect x="0" y="5" width="1" height="1" fill="#000"/><rect x="1" y="5" width="1" height="1" fill="#880088"/><rect x="2" y="5" width="1" height="1" fill="#E8B8E8"/><rect x="3" y="5" width="10" height="1" fill="#880088"/><rect x="13" y="5" width="1" height="1" fill="#000"/><rect x="0" y="6" width="1" height="1" fill="#000"/><rect x="1" y="6" width="2" height="1" fill="#880088"/><rect x="3" y="6" width="1" height="1" fill="#E8B8E8"/><rect x="4" y="6" width="10" height="1" fill="#880088"/><rect x="14" y="6" width="1" height="1" fill="#000"/><rect x="0" y="7" width="1" height="1" fill="#000"/><rect x="1" y="7" width="3" height="1" fill="#880088"/><rect x="4" y="7" width="1" height="1" fill="#E8B8E8"/><rect x="5" y="7" width="10" height="1" fill="#880088"/><rect x="15" y="7" width="2" height="1" fill="#000"/><rect x="-1" y="8" width="2" height="1" fill="#000"/><rect x="1" y="8" width="4" height="1" fill="#880088"/><rect x="5" y="8" width="1" height="1" fill="#E8B8E8"/><rect x="6" y="8" width="8" height="1" fill="#880088"/><rect x="14" y="8" width="1" height="1" fill="#000"/><rect x="15" y="8" width="1" height="1" fill="#fff"/><rect x="16" y="8" width="1" height="1" fill="#000"/><rect x="0" y="9" width="2" height="1" fill="#000"/><rect x="2" y="9" width="4" height="1" fill="#880088"/><rect x="6" y="9" width="1" height="1" fill="#E8B8E8"/><rect x="7" y="9" width="5" height="1" fill="#880088"/><rect x="12" y="9" width="1" height="1" fill="#000"/><rect x="13" y="9" width="2" height="1" fill="#fff"/><rect x="15" y="9" width="1" height="1" fill="#000"/><rect x="1" y="10" width="2" height="1" fill="#000"/><rect x="3" y="10" width="4" height="1" fill="#880088"/><rect x="7" y="10" width="1" height="1" fill="#E8B8E8"/><rect x="8" y="10" width="3" height="1" fill="#000"/><rect x="11" y="10" width="4" height="1" fill="#fff"/><rect x="15" y="10" width="2" height="1" fill="#000"/><rect x="2" y="11" width="2" height="1" fill="#000"/><rect x="4" y="11" width="4" height="1" fill="#880088"/><rect x="8" y="11" width="1" height="1" fill="#000"/><rect x="9" y="11" width="5" height="1" fill="#fff"/><rect x="14" y="11" width="1" height="1" fill="#000"/><rect x="3" y="12" width="2" height="1" fill="#000"/><rect x="5" y="12" width="3" height="1" fill="#880088"/><rect x="8" y="12" width="1" height="1" fill="#000"/><rect x="9" y="12" width="2" height="1" fill="#fff"/><rect x="11" y="12" width="3" height="1" fill="#000"/><rect x="4" y="13" width="2" height="1" fill="#000"/><rect x="6" y="13" width="2" height="1" fill="#880088"/><rect x="8" y="13" width="1" height="1" fill="#000"/><rect x="9" y="13" width="1" height="1" fill="#fff"/><rect x="10" y="13" width="2" height="1" fill="#000"/><rect x="6" y="14" width="4" height="1" fill="#000"/></svg><span class="a" style="left:43px;top:0">网络函数</span></div>
<div class="xb" style="top:276px"><div class="xh"></div><div class="xv"></div></div>
<div class="hd" style="left:17px;top:280px;width:5px"></div>
<div class="tr" style="top:272px;left:0;width:220px"><svg class="a" style="left:22px;top:0px" width="17" height="16" viewBox="0 0 17 16" shape-rendering="crispEdges"><rect x="7" y="0" width="2" height="1" fill="#000"/><rect x="5" y="1" width="2" height="1" fill="#000"/><rect x="7" y="1" width="2" height="1" fill="#880088"/><rect x="9" y="1" width="1" height="1" fill="#000"/><rect x="3" y="2" width="2" height="1" fill="#000"/><rect x="5" y="2" width="5" height="1" fill="#880088"/><rect x="10" y="2" width="1" height="1" fill="#000"/><rect x="1" y="3" width="2" height="1" fill="#000"/><rect x="3" y="3" width="8" height="1" fill="#880088"/><rect x="11" y="3" width="1" height="1" fill="#000"/><rect x="0" y="4" width="1" height="1" fill="#000"/><rect x="1" y="4" width="1" height="1" fill="#E8B8E8"/><rect x="2" y="4" width="10" height="1" fill="#880088"/><rect x="12" y="4" width="1" height="1" fill="#000"/><rect x="0" y="5" width="1" height="1" fill="#000"/><rect x="1" y="5" width="1" height="1" fill="#880088"/><rect x="2" y="5" width="1" height="1" fill="#E8B8E8"/><rect x="3" y="5" width="10" height="1" fill="#880088"/><rect x="13" y="5" width="1" height="1" fill="#000"/><rect x="0" y="6" width="1" height="1" fill="#000"/><rect x="1" y="6" width="2" height="1" fill="#880088"/><rect x="3" y="6" width="1" height="1" fill="#E8B8E8"/><rect x="4" y="6" width="10" height="1" fill="#880088"/><rect x="14" y="6" width="1" height="1" fill="#000"/><rect x="0" y="7" width="1" height="1" fill="#000"/><rect x="1" y="7" width="3" height="1" fill="#880088"/><rect x="4" y="7" width="1" height="1" fill="#E8B8E8"/><rect x="5" y="7" width="10" height="1" fill="#880088"/><rect x="15" y="7" width="2" height="1" fill="#000"/><rect x="-1" y="8" width="2" height="1" fill="#000"/><rect x="1" y="8" width="4" height="1" fill="#880088"/><rect x="5" y="8" width="1" height="1" fill="#E8B8E8"/><rect x="6" y="8" width="8" height="1" fill="#880088"/><rect x="14" y="8" width="1" height="1" fill="#000"/><rect x="15" y="8" width="1" height="1" fill="#fff"/><rect x="16" y="8" width="1" height="1" fill="#000"/><rect x="0" y="9" width="2" height="1" fill="#000"/><rect x="2" y="9" width="4" height="1" fill="#880088"/><rect x="6" y="9" width="1" height="1" fill="#E8B8E8"/><rect x="7" y="9" width="5" height="1" fill="#880088"/><rect x="12" y="9" width="1" height="1" fill="#000"/><rect x="13" y="9" width="2" height="1" fill="#fff"/><rect x="15" y="9" width="1" height="1" fill="#000"/><rect x="1" y="10" width="2" height="1" fill="#000"/><rect x="3" y="10" width="4" height="1" fill="#880088"/><rect x="7" y="10" width="1" height="1" fill="#E8B8E8"/><rect x="8" y="10" width="3" height="1" fill="#000"/><rect x="11" y="10" width="4" height="1" fill="#fff"/><rect x="15" y="10" width="2" height="1" fill="#000"/><rect x="2" y="11" width="2" height="1" fill="#000"/><rect x="4" y="11" width="4" height="1" fill="#880088"/><rect x="8" y="11" width="1" height="1" fill="#000"/><rect x="9" y="11" width="5" height="1" fill="#fff"/><rect x="14" y="11" width="1" height="1" fill="#000"/><rect x="3" y="12" width="2" height="1" fill="#000"/><rect x="5" y="12" width="3" height="1" fill="#880088"/><rect x="8" y="12" width="1" height="1" fill="#000"/><rect x="9" y="12" width="2" height="1" fill="#fff"/><rect x="11" y="12" width="3" height="1" fill="#000"/><rect x="4" y="13" width="2" height="1" fill="#000"/><rect x="6" y="13" width="2" height="1" fill="#880088"/><rect x="8" y="13" width="1" height="1" fill="#000"/><rect x="9" y="13" width="1" height="1" fill="#fff"/><rect x="10" y="13" width="2" height="1" fill="#000"/><rect x="6" y="14" width="4" height="1" fill="#000"/></svg><span class="a" style="left:43px;top:0">位图、图标和光栅运算函数</span></div>
<div class="xb" style="top:292px"><div class="xh"></div><div class="xv"></div></div>
<div class="hd" style="left:17px;top:296px;width:5px"></div>
<div class="tr" style="top:288px;left:0;width:220px"><svg class="a" style="left:22px;top:0px" width="17" height="16" viewBox="0 0 17 16" shape-rendering="crispEdges"><rect x="7" y="0" width="2" height="1" fill="#000"/><rect x="5" y="1" width="2" height="1" fill="#000"/><rect x="7" y="1" width="2" height="1" fill="#880088"/><rect x="9" y="1" width="1" height="1" fill="#000"/><rect x="3" y="2" width="2" height="1" fill="#000"/><rect x="5" y="2" width="5" height="1" fill="#880088"/><rect x="10" y="2" width="1" height="1" fill="#000"/><rect x="1" y="3" width="2" height="1" fill="#000"/><rect x="3" y="3" width="8" height="1" fill="#880088"/><rect x="11" y="3" width="1" height="1" fill="#000"/><rect x="0" y="4" width="1" height="1" fill="#000"/><rect x="1" y="4" width="1" height="1" fill="#E8B8E8"/><rect x="2" y="4" width="10" height="1" fill="#880088"/><rect x="12" y="4" width="1" height="1" fill="#000"/><rect x="0" y="5" width="1" height="1" fill="#000"/><rect x="1" y="5" width="1" height="1" fill="#880088"/><rect x="2" y="5" width="1" height="1" fill="#E8B8E8"/><rect x="3" y="5" width="10" height="1" fill="#880088"/><rect x="13" y="5" width="1" height="1" fill="#000"/><rect x="0" y="6" width="1" height="1" fill="#000"/><rect x="1" y="6" width="2" height="1" fill="#880088"/><rect x="3" y="6" width="1" height="1" fill="#E8B8E8"/><rect x="4" y="6" width="10" height="1" fill="#880088"/><rect x="14" y="6" width="1" height="1" fill="#000"/><rect x="0" y="7" width="1" height="1" fill="#000"/><rect x="1" y="7" width="3" height="1" fill="#880088"/><rect x="4" y="7" width="1" height="1" fill="#E8B8E8"/><rect x="5" y="7" width="10" height="1" fill="#880088"/><rect x="15" y="7" width="2" height="1" fill="#000"/><rect x="-1" y="8" width="2" height="1" fill="#000"/><rect x="1" y="8" width="4" height="1" fill="#880088"/><rect x="5" y="8" width="1" height="1" fill="#E8B8E8"/><rect x="6" y="8" width="8" height="1" fill="#880088"/><rect x="14" y="8" width="1" height="1" fill="#000"/><rect x="15" y="8" width="1" height="1" fill="#fff"/><rect x="16" y="8" width="1" height="1" fill="#000"/><rect x="0" y="9" width="2" height="1" fill="#000"/><rect x="2" y="9" width="4" height="1" fill="#880088"/><rect x="6" y="9" width="1" height="1" fill="#E8B8E8"/><rect x="7" y="9" width="5" height="1" fill="#880088"/><rect x="12" y="9" width="1" height="1" fill="#000"/><rect x="13" y="9" width="2" height="1" fill="#fff"/><rect x="15" y="9" width="1" height="1" fill="#000"/><rect x="1" y="10" width="2" height="1" fill="#000"/><rect x="3" y="10" width="4" height="1" fill="#880088"/><rect x="7" y="10" width="1" height="1" fill="#E8B8E8"/><rect x="8" y="10" width="3" height="1" fill="#000"/><rect x="11" y="10" width="4" height="1" fill="#fff"/><rect x="15" y="10" width="2" height="1" fill="#000"/><rect x="2" y="11" width="2" height="1" fill="#000"/><rect x="4" y="11" width="4" height="1" fill="#880088"/><rect x="8" y="11" width="1" height="1" fill="#000"/><rect x="9" y="11" width="5" height="1" fill="#fff"/><rect x="14" y="11" width="1" height="1" fill="#000"/><rect x="3" y="12" width="2" height="1" fill="#000"/><rect x="5" y="12" width="3" height="1" fill="#880088"/><rect x="8" y="12" width="1" height="1" fill="#000"/><rect x="9" y="12" width="2" height="1" fill="#fff"/><rect x="11" y="12" width="3" height="1" fill="#000"/><rect x="4" y="13" width="2" height="1" fill="#000"/><rect x="6" y="13" width="2" height="1" fill="#880088"/><rect x="8" y="13" width="1" height="1" fill="#000"/><rect x="9" y="13" width="1" height="1" fill="#fff"/><rect x="10" y="13" width="2" height="1" fill="#000"/><rect x="6" y="14" width="4" height="1" fill="#000"/></svg><span class="a" style="left:43px;top:0">文本和字体函数</span></div>
<div class="xb" style="top:308px"><div class="xh"></div><div class="xv"></div></div>
<div class="hd" style="left:17px;top:312px;width:5px"></div>
<div class="tr" style="top:304px;left:0;width:220px"><svg class="a" style="left:22px;top:0px" width="17" height="16" viewBox="0 0 17 16" shape-rendering="crispEdges"><rect x="7" y="0" width="2" height="1" fill="#000"/><rect x="5" y="1" width="2" height="1" fill="#000"/><rect x="7" y="1" width="2" height="1" fill="#880088"/><rect x="9" y="1" width="1" height="1" fill="#000"/><rect x="3" y="2" width="2" height="1" fill="#000"/><rect x="5" y="2" width="5" height="1" fill="#880088"/><rect x="10" y="2" width="1" height="1" fill="#000"/><rect x="1" y="3" width="2" height="1" fill="#000"/><rect x="3" y="3" width="8" height="1" fill="#880088"/><rect x="11" y="3" width="1" height="1" fill="#000"/><rect x="0" y="4" width="1" height="1" fill="#000"/><rect x="1" y="4" width="1" height="1" fill="#E8B8E8"/><rect x="2" y="4" width="10" height="1" fill="#880088"/><rect x="12" y="4" width="1" height="1" fill="#000"/><rect x="0" y="5" width="1" height="1" fill="#000"/><rect x="1" y="5" width="1" height="1" fill="#880088"/><rect x="2" y="5" width="1" height="1" fill="#E8B8E8"/><rect x="3" y="5" width="10" height="1" fill="#880088"/><rect x="13" y="5" width="1" height="1" fill="#000"/><rect x="0" y="6" width="1" height="1" fill="#000"/><rect x="1" y="6" width="2" height="1" fill="#880088"/><rect x="3" y="6" width="1" height="1" fill="#E8B8E8"/><rect x="4" y="6" width="10" height="1" fill="#880088"/><rect x="14" y="6" width="1" height="1" fill="#000"/><rect x="0" y="7" width="1" height="1" fill="#000"/><rect x="1" y="7" width="3" height="1" fill="#880088"/><rect x="4" y="7" width="1" height="1" fill="#E8B8E8"/><rect x="5" y="7" width="10" height="1" fill="#880088"/><rect x="15" y="7" width="2" height="1" fill="#000"/><rect x="-1" y="8" width="2" height="1" fill="#000"/><rect x="1" y="8" width="4" height="1" fill="#880088"/><rect x="5" y="8" width="1" height="1" fill="#E8B8E8"/><rect x="6" y="8" width="8" height="1" fill="#880088"/><rect x="14" y="8" width="1" height="1" fill="#000"/><rect x="15" y="8" width="1" height="1" fill="#fff"/><rect x="16" y="8" width="1" height="1" fill="#000"/><rect x="0" y="9" width="2" height="1" fill="#000"/><rect x="2" y="9" width="4" height="1" fill="#880088"/><rect x="6" y="9" width="1" height="1" fill="#E8B8E8"/><rect x="7" y="9" width="5" height="1" fill="#880088"/><rect x="12" y="9" width="1" height="1" fill="#000"/><rect x="13" y="9" width="2" height="1" fill="#fff"/><rect x="15" y="9" width="1" height="1" fill="#000"/><rect x="1" y="10" width="2" height="1" fill="#000"/><rect x="3" y="10" width="4" height="1" fill="#880088"/><rect x="7" y="10" width="1" height="1" fill="#E8B8E8"/><rect x="8" y="10" width="3" height="1" fill="#000"/><rect x="11" y="10" width="4" height="1" fill="#fff"/><rect x="15" y="10" width="2" height="1" fill="#000"/><rect x="2" y="11" width="2" height="1" fill="#000"/><rect x="4" y="11" width="4" height="1" fill="#880088"/><rect x="8" y="11" width="1" height="1" fill="#000"/><rect x="9" y="11" width="5" height="1" fill="#fff"/><rect x="14" y="11" width="1" height="1" fill="#000"/><rect x="3" y="12" width="2" height="1" fill="#000"/><rect x="5" y="12" width="3" height="1" fill="#880088"/><rect x="8" y="12" width="1" height="1" fill="#000"/><rect x="9" y="12" width="2" height="1" fill="#fff"/><rect x="11" y="12" width="3" height="1" fill="#000"/><rect x="4" y="13" width="2" height="1" fill="#000"/><rect x="6" y="13" width="2" height="1" fill="#880088"/><rect x="8" y="13" width="1" height="1" fill="#000"/><rect x="9" y="13" width="1" height="1" fill="#fff"/><rect x="10" y="13" width="2" height="1" fill="#000"/><rect x="6" y="14" width="4" height="1" fill="#000"/></svg><span class="a" style="left:43px;top:0">文件处理函数</span></div>
<div class="xb" style="top:324px"><div class="xh"></div><div class="xv"></div></div>
<div class="hd" style="left:17px;top:328px;width:5px"></div>
<div class="tr" style="top:320px;left:0;width:220px"><svg class="a" style="left:22px;top:0px" width="17" height="16" viewBox="0 0 17 16" shape-rendering="crispEdges"><rect x="7" y="0" width="2" height="1" fill="#000"/><rect x="5" y="1" width="2" height="1" fill="#000"/><rect x="7" y="1" width="2" height="1" fill="#880088"/><rect x="9" y="1" width="1" height="1" fill="#000"/><rect x="3" y="2" width="2" height="1" fill="#000"/><rect x="5" y="2" width="5" height="1" fill="#880088"/><rect x="10" y="2" width="1" height="1" fill="#000"/><rect x="1" y="3" width="2" height="1" fill="#000"/><rect x="3" y="3" width="8" height="1" fill="#880088"/><rect x="11" y="3" width="1" height="1" fill="#000"/><rect x="0" y="4" width="1" height="1" fill="#000"/><rect x="1" y="4" width="1" height="1" fill="#E8B8E8"/><rect x="2" y="4" width="10" height="1" fill="#880088"/><rect x="12" y="4" width="1" height="1" fill="#000"/><rect x="0" y="5" width="1" height="1" fill="#000"/><rect x="1" y="5" width="1" height="1" fill="#880088"/><rect x="2" y="5" width="1" height="1" fill="#E8B8E8"/><rect x="3" y="5" width="10" height="1" fill="#880088"/><rect x="13" y="5" width="1" height="1" fill="#000"/><rect x="0" y="6" width="1" height="1" fill="#000"/><rect x="1" y="6" width="2" height="1" fill="#880088"/><rect x="3" y="6" width="1" height="1" fill="#E8B8E8"/><rect x="4" y="6" width="10" height="1" fill="#880088"/><rect x="14" y="6" width="1" height="1" fill="#000"/><rect x="0" y="7" width="1" height="1" fill="#000"/><rect x="1" y="7" width="3" height="1" fill="#880088"/><rect x="4" y="7" width="1" height="1" fill="#E8B8E8"/><rect x="5" y="7" width="10" height="1" fill="#880088"/><rect x="15" y="7" width="2" height="1" fill="#000"/><rect x="-1" y="8" width="2" height="1" fill="#000"/><rect x="1" y="8" width="4" height="1" fill="#880088"/><rect x="5" y="8" width="1" height="1" fill="#E8B8E8"/><rect x="6" y="8" width="8" height="1" fill="#880088"/><rect x="14" y="8" width="1" height="1" fill="#000"/><rect x="15" y="8" width="1" height="1" fill="#fff"/><rect x="16" y="8" width="1" height="1" fill="#000"/><rect x="0" y="9" width="2" height="1" fill="#000"/><rect x="2" y="9" width="4" height="1" fill="#880088"/><rect x="6" y="9" width="1" height="1" fill="#E8B8E8"/><rect x="7" y="9" width="5" height="1" fill="#880088"/><rect x="12" y="9" width="1" height="1" fill="#000"/><rect x="13" y="9" width="2" height="1" fill="#fff"/><rect x="15" y="9" width="1" height="1" fill="#000"/><rect x="1" y="10" width="2" height="1" fill="#000"/><rect x="3" y="10" width="4" height="1" fill="#880088"/><rect x="7" y="10" width="1" height="1" fill="#E8B8E8"/><rect x="8" y="10" width="3" height="1" fill="#000"/><rect x="11" y="10" width="4" height="1" fill="#fff"/><rect x="15" y="10" width="2" height="1" fill="#000"/><rect x="2" y="11" width="2" height="1" fill="#000"/><rect x="4" y="11" width="4" height="1" fill="#880088"/><rect x="8" y="11" width="1" height="1" fill="#000"/><rect x="9" y="11" width="5" height="1" fill="#fff"/><rect x="14" y="11" width="1" height="1" fill="#000"/><rect x="3" y="12" width="2" height="1" fill="#000"/><rect x="5" y="12" width="3" height="1" fill="#880088"/><rect x="8" y="12" width="1" height="1" fill="#000"/><rect x="9" y="12" width="2" height="1" fill="#fff"/><rect x="11" y="12" width="3" height="1" fill="#000"/><rect x="4" y="13" width="2" height="1" fill="#000"/><rect x="6" y="13" width="2" height="1" fill="#880088"/><rect x="8" y="13" width="1" height="1" fill="#000"/><rect x="9" y="13" width="1" height="1" fill="#fff"/><rect x="10" y="13" width="2" height="1" fill="#000"/><rect x="6" y="14" width="4" height="1" fill="#000"/></svg><span class="a" style="left:43px;top:0">硬件与系统函数</span></div>
<div class="xb" style="top:340px"><div class="xh"></div><div class="xv"></div></div>
<div class="hd" style="left:17px;top:344px;width:5px"></div>
<div class="tr" style="top:336px;left:0;width:220px"><svg class="a" style="left:22px;top:0px" width="17" height="16" viewBox="0 0 17 16" shape-rendering="crispEdges"><rect x="7" y="0" width="2" height="1" fill="#000"/><rect x="5" y="1" width="2" height="1" fill="#000"/><rect x="7" y="1" width="2" height="1" fill="#880088"/><rect x="9" y="1" width="1" height="1" fill="#000"/><rect x="3" y="2" width="2" height="1" fill="#000"/><rect x="5" y="2" width="5" height="1" fill="#880088"/><rect x="10" y="2" width="1" height="1" fill="#000"/><rect x="1" y="3" width="2" height="1" fill="#000"/><rect x="3" y="3" width="8" height="1" fill="#880088"/><rect x="11" y="3" width="1" height="1" fill="#000"/><rect x="0" y="4" width="1" height="1" fill="#000"/><rect x="1" y="4" width="1" height="1" fill="#E8B8E8"/><rect x="2" y="4" width="10" height="1" fill="#880088"/><rect x="12" y="4" width="1" height="1" fill="#000"/><rect x="0" y="5" width="1" height="1" fill="#000"/><rect x="1" y="5" width="1" height="1" fill="#880088"/><rect x="2" y="5" width="1" height="1" fill="#E8B8E8"/><rect x="3" y="5" width="10" height="1" fill="#880088"/><rect x="13" y="5" width="1" height="1" fill="#000"/><rect x="0" y="6" width="1" height="1" fill="#000"/><rect x="1" y="6" width="2" height="1" fill="#880088"/><rect x="3" y="6" width="1" height="1" fill="#E8B8E8"/><rect x="4" y="6" width="10" height="1" fill="#880088"/><rect x="14" y="6" width="1" height="1" fill="#000"/><rect x="0" y="7" width="1" height="1" fill="#000"/><rect x="1" y="7" width="3" height="1" fill="#880088"/><rect x="4" y="7" width="1" height="1" fill="#E8B8E8"/><rect x="5" y="7" width="10" height="1" fill="#880088"/><rect x="15" y="7" width="2" height="1" fill="#000"/><rect x="-1" y="8" width="2" height="1" fill="#000"/><rect x="1" y="8" width="4" height="1" fill="#880088"/><rect x="5" y="8" width="1" height="1" fill="#E8B8E8"/><rect x="6" y="8" width="8" height="1" fill="#880088"/><rect x="14" y="8" width="1" height="1" fill="#000"/><rect x="15" y="8" width="1" height="1" fill="#fff"/><rect x="16" y="8" width="1" height="1" fill="#000"/><rect x="0" y="9" width="2" height="1" fill="#000"/><rect x="2" y="9" width="4" height="1" fill="#880088"/><rect x="6" y="9" width="1" height="1" fill="#E8B8E8"/><rect x="7" y="9" width="5" height="1" fill="#880088"/><rect x="12" y="9" width="1" height="1" fill="#000"/><rect x="13" y="9" width="2" height="1" fill="#fff"/><rect x="15" y="9" width="1" height="1" fill="#000"/><rect x="1" y="10" width="2" height="1" fill="#000"/><rect x="3" y="10" width="4" height="1" fill="#880088"/><rect x="7" y="10" width="1" height="1" fill="#E8B8E8"/><rect x="8" y="10" width="3" height="1" fill="#000"/><rect x="11" y="10" width="4" height="1" fill="#fff"/><rect x="15" y="10" width="2" height="1" fill="#000"/><rect x="2" y="11" width="2" height="1" fill="#000"/><rect x="4" y="11" width="4" height="1" fill="#880088"/><rect x="8" y="11" width="1" height="1" fill="#000"/><rect x="9" y="11" width="5" height="1" fill="#fff"/><rect x="14" y="11" width="1" height="1" fill="#000"/><rect x="3" y="12" width="2" height="1" fill="#000"/><rect x="5" y="12" width="3" height="1" fill="#880088"/><rect x="8" y="12" width="1" height="1" fill="#000"/><rect x="9" y="12" width="2" height="1" fill="#fff"/><rect x="11" y="12" width="3" height="1" fill="#000"/><rect x="4" y="13" width="2" height="1" fill="#000"/><rect x="6" y="13" width="2" height="1" fill="#880088"/><rect x="8" y="13" width="1" height="1" fill="#000"/><rect x="9" y="13" width="1" height="1" fill="#fff"/><rect x="10" y="13" width="2" height="1" fill="#000"/><rect x="6" y="14" width="4" height="1" fill="#000"/></svg><span class="a" style="left:43px;top:0">数据类型</span></div>
</div>

<div class="radio on" style="left:32px;top:517px"></div>
<div class="a st" style="left:48px;top:515px;white-space:nowrap">中文<span class="m">API</span>名</div>
<div class="radio" style="left:119px;top:517px"></div>
<div class="a st" style="left:135px;top:515px;white-space:nowrap">英文<span class="m">API</span>名</div>

<!-- right tabs -->
<div class="pane" style="left:236px;top:59px;width:412px;height:294px"></div>
<div class="tabi" style="left:317px;width:74px;padding-left:2px"><span class="m">API</span>相关例程</div>
<div class="taba" style="left:236px;width:82px;padding-left:6px;line-height:20px">选用<span class="m">API</span>数据</div>
<div class="a" style="left:237px;top:59px;width:80px;height:2px;background:#E0E3ED;z-index:3"></div>
<div class="sunk" style="left:244px;top:69px;width:316px;height:276px"></div>
<div class="a st" style="left:570px;top:72px;width:80px;line-height:11.7px;white-space:pre">*注意:
请通过易语言
菜单<span class="fw" style="text-align:right">“</span>工具-&gt;
执行易向导<span class="fw" style="text-align:left">”</span>
启动本程序以
实现添加<span class="m">API</span>
到易程序<span class="fw">。</span></div>
<div class="btn" style="top:166px">全选<span class="m">(A)</span></div>
<div class="btn" style="top:196px">放弃<span class="m">(D)</span></div>
<div class="btn" style="top:226px">导入<span class="m">(Z)</span></div>
<div class="btn" style="top:256px">去除</div>
<div class="btn" style="top:286px">清空<span class="m">(N)</span></div>
<div class="btn" style="top:316px">关闭<span class="m">(C)</span></div>

<!-- group box -->
<div class="pane" style="left:233px;top:365px;width:412px;height:173px"></div>
<div class="a" style="left:240px;top:358px;width:161px;height:16px;background:#E0E3ED"></div>
<div class="radio on" style="left:241px;top:360px"></div>
<div class="a st" style="left:257px;top:359px;white-space:nowrap">代码形式</div>
<div class="radio" style="left:321px;top:360px"></div>
<div class="a st" style="left:337px;top:359px;white-space:nowrap">文本形式</div>

<!-- grid -->
<div class="a" style="left:241px;top:381px;width:194px;height:148px;border-top:1px solid #A0A0A0;border-left:1px solid #A0A0A0;border-bottom:1px solid #fff;border-right:1px solid #fff;background:#F0F0F0">
 <div class="a" style="left:0;top:0;width:192px;height:146px;border-top:1px solid #696969;border-left:1px solid #696969;border-right:1px solid #F0F0F0;border-bottom:1px solid #F0F0F0;overflow:hidden;background:#fff">
  <div class="a" style="left:0;top:0;width:173px;height:23px;background:#99C0EE"></div>
  <div class="a" style="left:152px;top:0;width:1px;height:47px;background:#C4C4C4"></div>
  <div class="a gt" style="left:4px;top:4px;color:#2B1B00">DLL命令名</div>
  <div class="a gt" style="left:157px;top:4px;color:#2B1B00">返回</div>
  <div class="a" style="left:0;top:47px;width:173px;height:1px;background:#A0A0A0"></div>
  <div class="a gt" style="left:4px;top:28px;color:#1B1BA8">消息广播_</div>
  <div class="a gt" style="left:157px;top:28px;color:#0000FF">整数</div>
  <div class="a" style="left:0;top:48px;width:173px;height:23px;background:#E5EAE2"></div>
  <div class="a" style="left:0;top:71px;width:173px;height:1px;background:#A0A0A0"></div>
  <div class="a gt" style="left:4px;top:52px;color:#222">Dll库文件名:</div>
  <div class="a gt" style="left:4px;top:76px;color:#8B0000">user32.dll</div>
  <div class="a" style="left:0;top:95px;width:173px;height:1px;background:#A0A0A0"></div>
  <div class="a" style="left:0;top:96px;width:173px;height:23px;background:#E5EAE2"></div>
  <div class="a" style="left:0;top:119px;width:173px;height:1px;background:#A0A0A0"></div>
  <div class="a gt" style="left:4px;top:100px;color:#222">在Dll库中对应命令名:</div>
  <div class="a" style="left:0;top:120px;width:173px;height:9px;overflow:hidden"><div class="a gt" style="left:4px;top:5px;color:#B00000">SendMessageA</div></div>
  <div class="a" style="left:173px;top:0;width:17px;height:146px;background:#F0F0F0"></div>
  <div class="a" style="left:174px;top:17px;width:15px;height:42px;background:#CDCDCD"></div>
  <div class="a" style="left:0;top:129px;width:173px;height:17px;background:#F0F0F0"></div>
  <div class="a" style="left:17px;top:129px;width:35px;height:15px;background:#CDCDCD"></div>
  <svg class="a" style="left:173px;top:0" width="17" height="146" viewBox="0 0 17 146" fill="none" stroke="#606060" stroke-width="1.6">
   <path d="M5 10L8.5 6.5L12 10"/><path d="M5 118L8.5 121.5L12 118"/>
  </svg>
  <svg class="a" style="left:0;top:129px" width="173" height="17" viewBox="0 0 173 17" fill="none" stroke="#606060" stroke-width="1.6">
   <path d="M10 4L6.5 7.5L10 11"/><path d="M163.5 4L167 7.5L163.5 11"/>
  </svg>
 </div>
</div>

<div class="a" style="left:439px;top:381px;width:194px;height:148px;border-top:1px solid #A0A0A0;border-left:1px solid #A0A0A0;border-bottom:1px solid #fff;border-right:1px solid #fff">
 <div class="a" style="left:0;top:0;width:192px;height:146px;border-top:1px solid #696969;border-left:1px solid #696969;border-right:1px solid #E3E3E3;border-bottom:1px solid #E3E3E3;background:#fff">
  <div class="a" style="left:0;top:0;width:59px;height:24px;border-right:1px solid #C4C4C4;border-bottom:1px solid #C4C4C4"></div>
 </div>
</div>

<!-- status bar -->
<div class="a" style="left:1px;top:542px;width:655px;height:22px;background:#F0F0F0;border-top:1px solid #DADADA"></div>
<div class="a" style="left:39px;top:543px;width:1px;height:21px;background:#D8D8D8"></div>
<div class="a st" style="left:3px;top:545px;white-space:nowrap"><span class="m">API:</span></div>
<div class="a st" style="left:44px;top:545px;white-space:nowrap">消息广播_</div>
<!-- watermark -->
<div class="a" style="left:502px;top:500px;width:150px;height:60px;background:linear-gradient(to right,#F4E000 0%,#F0D800 18%,#D8B030 32%,#B88050 45%,#A05A6A 58%,#902E88 74%,#8A1A8A 100%);overflow:hidden">
 <div class="a wmt" style="left:0px;top:-1px;font-size:30px;line-height:34px;transform:scale(0.833,1.14);transform-origin:0 0">无忧编程论坛</div>
 <div class="a wmf" style="left:0px;top:-1px;font-size:30px;line-height:34px;transform:scale(0.833,1.14);transform-origin:0 0;background-image:linear-gradient(to bottom,#B8A098 0%,#5A3C38 30%,#8A6058 50%,#4A302C 75%,#907068 100%)">无忧编程论坛</div>
 <div class="a wmt" style="left:2px;top:34px;font-size:24px;line-height:26px;letter-spacing:-0.2px;transform:scaleX(0.99);transform-origin:0 0">www.whct.net</div>
 <div class="a wmf" style="left:2px;top:34px;font-size:24px;line-height:26px;letter-spacing:-0.2px;transform:scaleX(0.99);transform-origin:0 0;background-image:linear-gradient(to bottom,#B8A098 0%,#5A3C38 40%,#8A6058 60%,#4A302C 85%,#907068 100%)">www.whct.net</div>
</div>
</body></html>
